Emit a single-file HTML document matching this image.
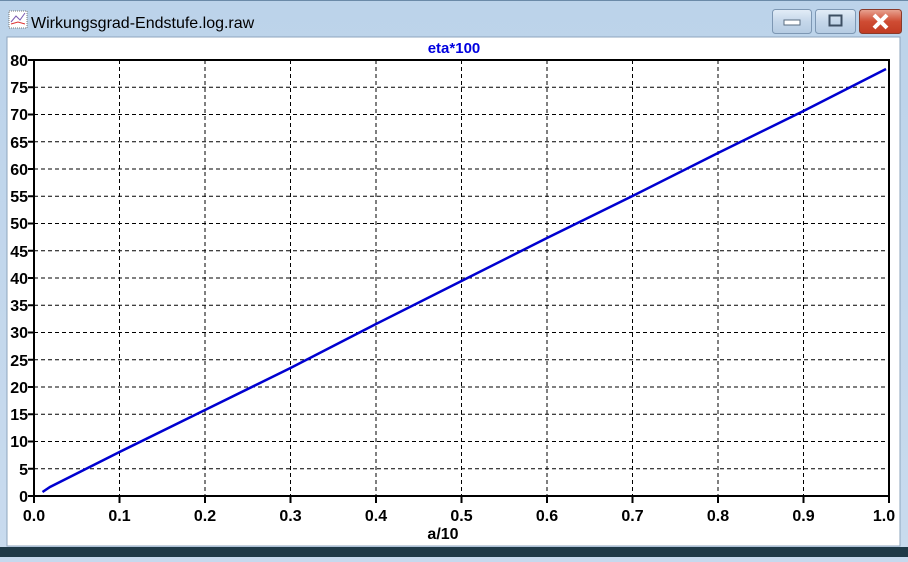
<!DOCTYPE html>
<html><head><style>
body{margin:0;width:908px;height:557px;overflow:hidden;background:#c6d9ee;font-family:"Liberation Sans",sans-serif}
</style></head><body>
<svg width="908" height="557" xmlns="http://www.w3.org/2000/svg" font-family="Liberation Sans, sans-serif">
<defs><linearGradient id="tb" x1="0" y1="0" x2="0" y2="1"><stop offset="0" stop-color="#bcd3ea"/><stop offset="1" stop-color="#c9dbee"/></linearGradient>
<linearGradient id="cl" x1="0" y1="0" x2="0" y2="1"><stop offset="0" stop-color="#e8a493"/><stop offset="0.5" stop-color="#cf4c33"/><stop offset="1" stop-color="#c13b22"/></linearGradient>
<linearGradient id="bt" x1="0" y1="0" x2="0" y2="1"><stop offset="0" stop-color="#e3edf7"/><stop offset="0.5" stop-color="#c5d7ea"/><stop offset="1" stop-color="#b5cbe2"/></linearGradient></defs>
<rect width="908" height="557" fill="url(#tb)"/>
<rect x="0" y="0" width="908" height="1" fill="#6b8aa8"/>
<rect x="9" y="11" width="18" height="17" fill="#fff" stroke="#777" stroke-dasharray="1,1"/>
<path d="M11 22 L16 16 L20 20 L25 13" stroke="#7a5ab0" fill="none"/>
<path d="M11 24 L18 22 L25 24" stroke="#d33" fill="none"/>
<text x="31" y="28" font-size="16" fill="#000">Wirkungsgrad-Endstufe.log.raw</text>
<rect x="772.5" y="9.5" width="39" height="24" rx="3" fill="url(#bt)" stroke="#7d97b3"/>
<rect x="784" y="20" width="16" height="5" fill="#fff" stroke="#5a6d82"/>
<rect x="815.5" y="9.5" width="40" height="24" rx="3" fill="url(#bt)" stroke="#7d97b3"/>
<rect x="829.5" y="15.5" width="12" height="10" fill="none" stroke="#3d4f63" stroke-width="2"/>
<rect x="859.5" y="9.5" width="42" height="24" rx="3" fill="url(#cl)" stroke="#8a3a2a"/>
<path d="M874 15 L887 28 M887 15 L874 28" stroke="#fff" stroke-width="4"/>
<rect x="7" y="37" width="893" height="509" fill="#fff" stroke="#8ea5bd"/>
<rect x="0" y="547" width="908" height="10" fill="#1f3a48"/>
<text x="454" y="53" font-size="15" font-weight="bold" fill="#0000e0" text-anchor="middle">eta*100</text>
<g stroke="#000" stroke-dasharray="4,3" stroke-width="1">
<path d="M119.5 60V496M205 60V496M290.5 60V496M376 60V496M461.5 60V496M547 60V496M632.5 60V496M718 60V496M803.5 60V496"/>
<path d="M34 468.75H889M34 441.5H889M34 414.25H889M34 387H889M34 359.75H889M34 332.5H889M34 305.25H889M34 278H889M34 250.75H889M34 223.5H889M34 196.25H889M34 169H889M34 141.75H889M34 114.5H889M34 87.25H889"/>
</g>
<rect x="34" y="60" width="855" height="436" fill="none" stroke="#000" stroke-width="2"/>
<g stroke="#000" stroke-width="2">
<path d="M34 496v7M119.5 496v7M205 496v7M290.5 496v7M376 496v7M461.5 496v7M547 496v7M632.5 496v7M718 496v7M803.5 496v7M889 496v7"/>
<path d="M28 496h6M28 468.75h6M28 441.5h6M28 414.25h6M28 387h6M28 359.75h6M28 332.5h6M28 305.25h6M28 278h6M28 250.75h6M28 223.5h6M28 196.25h6M28 169h6M28 141.75h6M28 114.5h6M28 87.25h6M28 60h6"/>
</g>
<g font-size="16" font-weight="bold" fill="#000" text-anchor="end">
<text x="28" y="502">0</text><text x="28" y="475">5</text><text x="28" y="447">10</text><text x="28" y="420">15</text><text x="28" y="393">20</text><text x="28" y="366">25</text><text x="28" y="338">30</text><text x="28" y="311">35</text><text x="28" y="284">40</text><text x="28" y="257">45</text><text x="28" y="229">50</text><text x="28" y="202">55</text><text x="28" y="175">60</text><text x="28" y="148">65</text><text x="28" y="120">70</text><text x="28" y="93">75</text><text x="28" y="66">80</text>
</g>
<g font-size="16" font-weight="bold" fill="#000" text-anchor="middle">
<text x="34" y="521">0.0</text><text x="119.5" y="521">0.1</text><text x="205" y="521">0.2</text><text x="290.5" y="521">0.3</text><text x="376" y="521">0.4</text><text x="461.5" y="521">0.5</text><text x="547" y="521">0.6</text><text x="632.5" y="521">0.7</text><text x="718" y="521">0.8</text><text x="803.5" y="521">0.9</text><text x="884" y="521">1.0</text>
<text x="443" y="539">a/10</text>
</g>
<path d="M42.5 492 L50 487 L119.5 452 L205 410 L290.5 368 L376 324 L461.5 281 L547 238 L632.5 196 L718 153 L803.5 111 L886 69" stroke="#0000d0" stroke-width="2.5" fill="none"/>
</svg>
</body></html>
